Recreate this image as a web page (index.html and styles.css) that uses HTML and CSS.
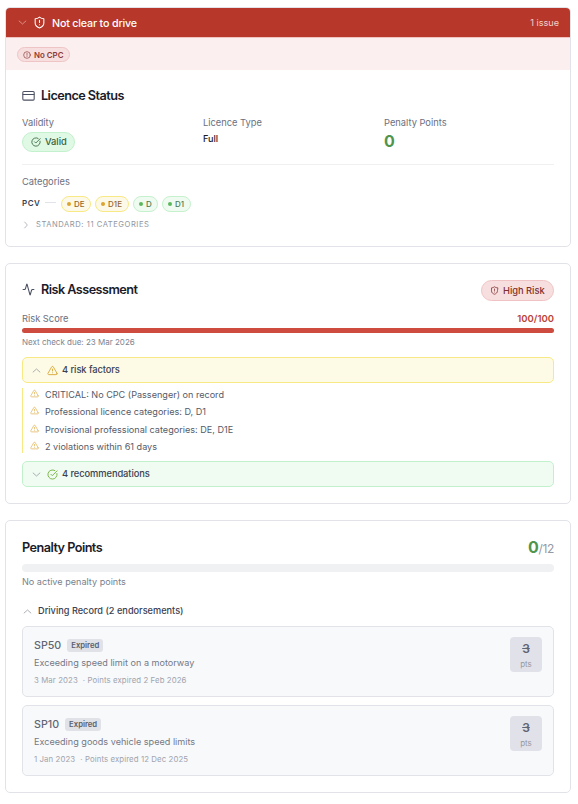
FILE: index.html
```html
<!DOCTYPE html>
<html lang="en">
<head>
<meta charset="utf-8">
<title>Driver licence check</title>
<link rel="stylesheet" href="styles.css">
</head>
<body>
<svg class="sprite" aria-hidden="true">
  <symbol id="down" viewBox="0 0 24 24"><path d="m3 8 9 8 9-8"/></symbol>
  <symbol id="up" viewBox="0 0 24 24"><path d="m3 16 9-8 9 8"/></symbol>
  <symbol id="right" viewBox="0 0 24 24"><path d="m8 3 8 9-8 9"/></symbol>
  <symbol id="shield" viewBox="0 0 24 24"><path d="M20 13c0 5-3.500 7.500-8 9-4.500-1.500-8-4-8-9V5c3 0 5.500-1 8-3 2.500 2 5 3 8 3zM12 8v4M12 16h.01"/></symbol>
  <symbol id="alert" viewBox="0 0 24 24"><circle cx="12" cy="12" r="10"/><path d="M12 7v6M12 16.500h.01"/></symbol>
  <symbol id="card" viewBox="0 0 24 24"><rect x="1.500" y="4.500" width="21" height="16" rx="2"/><path d="M2 10h20"/></symbol>
  <symbol id="check" viewBox="0 0 24 24"><path d="M21.800 10A10 10 0 1 1 17 3.300M8.500 11.500l3 3L22 4"/></symbol>
  <symbol id="pulse" viewBox="0 0 24 24"><path d="M2 12h2.500a2 2 0 0 0 1.900-1.500L8.800 2.200a.25.25 0 0 1 .48 0l5.440 19.600a.25.25 0 0 0 .48 0l2.350-8.300a2 2 0 0 1 1.950-1.500H22"/></symbol>
  <symbol id="warn" viewBox="0 0 24 24"><path d="m21.700 18-8-14a2 2 0 0 0-3.500 0l-8 14A2 2 0 0 0 4 21h16a2 2 0 0 0 1.700-3zM12 9v4M12 17h.01"/></symbol>
</svg>

<section class="card licence">
  <header class="status-bar">
    <svg class="icon chev"><use href="#down"/></svg>
    <svg class="icon shield"><use href="#shield"/></svg>
    <span class="status-title">Not clear to drive</span>
    <span class="issues">1 issue</span>
  </header>
  <div class="issue-list">
    <span class="issue-tag"><svg class="icon"><use href="#alert"/></svg><span>No CPC</span></span>
  </div>
  <div class="card-body">
    <h2 class="title"><svg class="icon"><use href="#card"/></svg><span>Licence Status</span></h2>
    <div class="facts">
      <div><div class="label">Validity</div><span class="valid"><svg class="icon"><use href="#check"/></svg><span>Valid</span></span></div>
      <div><div class="label">Licence Type</div><div class="type">Full</div></div>
      <div><div class="label">Penalty Points</div><div class="zero">0</div></div>
    </div>
    <div class="categories">
      <div class="label cat-label">Categories</div>
      <div class="cat-row">
        <span class="cat-group">PCV</span><span class="dash"></span>
        <span class="cat amber"><span>DE</span></span>
        <span class="cat amber"><span>D1E</span></span>
        <span class="cat green"><span>D</span></span>
        <span class="cat green"><span>D1</span></span>
      </div>
      <div class="standard"><svg class="icon"><use href="#right"/></svg><span>STANDARD: 11 CATEGORIES</span></div>
    </div>
  </div>
</section>

<section class="card risk">
  <div class="card-head">
    <h2 class="title"><svg class="icon"><use href="#pulse"/></svg><span>Risk Assessment</span></h2>
    <span class="high-risk"><svg class="icon"><use href="#shield"/></svg><span>High Risk</span></span>
  </div>
  <div class="score"><span class="label">Risk Score</span><span class="score-value">100/100</span></div>
  <div class="bar full"></div>
  <div class="next">Next check due: 23 Mar 2026</div>
  <div class="fold yellow"><svg class="icon chev"><use href="#up"/></svg><svg class="icon mark"><use href="#warn"/></svg><span>4 risk factors</span></div>
  <ul class="factors">
    <li><svg class="icon"><use href="#warn"/></svg><span>CRITICAL: No CPC (Passenger) on record</span></li>
    <li><svg class="icon"><use href="#warn"/></svg><span>Professional licence categories: D, D1</span></li>
    <li><svg class="icon"><use href="#warn"/></svg><span>Provisional professional categories: DE, D1E</span></li>
    <li><svg class="icon"><use href="#warn"/></svg><span>2 violations within 61 days</span></li>
  </ul>
  <div class="fold mint"><svg class="icon chev"><use href="#down"/></svg><svg class="icon mark"><use href="#check"/></svg><span>4 recommendations</span></div>
</section>

<section class="card points">
  <div class="points-head">
    <h2 class="title"><span>Penalty Points</span></h2>
    <div class="total"><b>0</b><span>/12</span></div>
  </div>
  <div class="bar empty"></div>
  <div class="none">No active penalty points</div>
  <div class="record"><svg class="icon"><use href="#up"/></svg><span>Driving Record (2 endorsements)</span></div>
  <article class="offence">
    <div>
      <div class="offence-head"><span class="code">SP50</span><span class="expired">Expired</span></div>
      <div class="desc"><span>Exceeding speed limit on a motorway</span></div>
      <div class="dates"><span>3 Mar 2023</span><span>· Points expired 2 Feb 2026</span></div>
    </div>
    <div class="pts"><s>3</s><span>pts</span></div>
  </article>
  <article class="offence">
    <div>
      <div class="offence-head"><span class="code">SP10</span><span class="expired">Expired</span></div>
      <div class="desc"><span>Exceeding goods vehicle speed limits</span></div>
      <div class="dates"><span>1 Jan 2023</span><span>· Points expired 12 Dec 2025</span></div>
    </div>
    <div class="pts"><s>3</s><span>pts</span></div>
  </article>
</section>
</body>
</html>
```
FILE: styles.css
```css
* { box-sizing: border-box; }
body { margin: 0; padding: 7px 7px 0 5px; background: #fff; color: #1b1c2b; font: 9.5px/14px Inter, sans-serif; white-space: nowrap; }
.sprite { display: none; }
.icon { display: block; flex: none; width: 10px; height: 10px; fill: none; stroke: currentColor; stroke-width: 2; stroke-linecap: round; stroke-linejoin: round; }
.card { width: 566px; border: 1px solid #e2e3e9; border-radius: 5px; background: #fff; overflow: hidden; margin-bottom: 16px; }
.licence { height: 240px; }
.risk { height: 241px; padding: 16px; }
.points { height: 273px; padding: 16px; margin-bottom: 0; }

.status-bar { height: 30px; display: flex; align-items: center; padding: 0 11px 0 12px; background: #b7382a; border-bottom: 1px solid #f0c3c1; color: #fff; }
.status-bar .chev { width: 9px; height: 9px; color: #e5aca5; }
.status-bar .shield { width: 13px; height: 13px; margin-left: 6px; }
.status-title { margin: 2px 0 0 6px; font-size: 10.7px; font-weight: 500; letter-spacing: -.17px; }
.issues { margin: 1px 0 0 auto; font-size: 9.1px; color: #f0cfcb; }
.issue-list { height: 32px; background: #fbf0ef; padding: 9px 11px; }
.issue-tag { display: flex; width: 53px; height: 15px; align-items: center; gap: 3px; padding: 0 5px; border: 1px solid #efc4c4; border-radius: 8px; background: #f7dfdf; color: #8d3a37; font-size: 7.9px; font-weight: 600; }
.issue-tag .icon { width: 8px; height: 8px; }

.card-body { padding: 16px; }
.title { display: flex; align-items: center; gap: 6px; margin: 0; height: 18px; font-size: 12.7px; line-height: 18px; font-weight: 600; letter-spacing: -.55px; }
.title span { padding-top: 1px; }
.title .icon { width: 13px; height: 13px; color: #4b5162; }
.facts { display: grid; grid-template-columns: repeat(3, 1fr); column-gap: 11px; height: 49px; margin-top: 12px; border-bottom: 1px solid #f0f0f3; }
.facts .type { margin-top: 2px; font-size: 9.1px; font-weight: 500; color: #1b1c2b; }
.label { color: #6b7080; font-size: 9.3px; height: 14px; }
.valid { display: flex; align-items: center; gap: 4px; width: 53px; height: 20px; margin-top: 2px; padding: 0 7px 0 8px; border: 1px solid #c3f0cd; border-radius: 10px; background: #e0f9e5; color: #35613d; font-size: 9.3px; font-weight: 500; }
.zero { margin-top: 1px; font-size: 16px; line-height: 20px; font-weight: 700; color: #50954b; }
.cat-label { margin-top: 10px; }
.cat-row { display: flex; align-items: center; height: 16px; margin-top: 7px; }
.cat-group { width: 19px; font-size: 8px; font-weight: 600; letter-spacing: .5px; color: #3c4150; margin-top: -3px; }
.dash { width: 11px; height: 1px; margin: -3px 5px 0 4px; background: #e2e3e8; }
.cat { display: flex; align-items: center; gap: 3px; height: 16px; margin-right: 4px; padding: 0 5px; border: 1px solid; border-radius: 8px; font-size: 8px; font-weight: 500; }
.cat span { min-width: 6px; letter-spacing: .1px; }
.cat::before { content: ""; width: 4px; height: 4px; border-radius: 50%; background: #5bb75b; }
.cat.amber { border-color: #f8e984; background: #fdf9e8; color: #94682f; }
.cat.amber::before { background: #dba52f; }
.cat.green { border-color: #c5f1cd; background: #effbf1; color: #4b7b50; }
.cat.amber:nth-child(3) { width: 30px; }
.cat.amber:nth-child(4) { width: 34px; }
.cat.green:nth-child(5) { width: 25px; }
.cat.green:nth-child(6) { width: 29px; }
.standard { display: flex; align-items: center; height: 14px; margin-top: 6px; color: #9096a1; font-size: 7.6px; letter-spacing: .55px; }
.standard .icon { width: 8px; height: 8px; margin-right: 6px; }

.card-head { display: flex; justify-content: space-between; height: 20px; }
.high-risk { display: flex; align-items: center; gap: 4px; width: 73px; height: 21px; padding: 0 0 0 8px; border: 1px solid #efc3c3; border-radius: 11px; background: #f7dfdf; color: #7f302e; font-size: 9.3px; font-weight: 500; }
.high-risk .icon { width: 9px; height: 9px; }
.score { display: flex; justify-content: space-between; height: 14px; margin-top: 12px; }
.score-value { color: #bd3f32; font-size: 9.5px; font-weight: 600; }
.bar { border-radius: 6px; }
.bar.full { height: 5px; margin-top: 2px; background: #cd4b3f; }
.next { height: 14px; margin-top: 2px; color: #7e8390; font-size: 8px; }
.fold { display: flex; align-items: center; height: 26px; padding-left: 9px; border: 1px solid; border-radius: 5px; font-size: 9.3px; font-weight: 500; letter-spacing: -.06px; color: #3b4151; }
.fold .chev { width: 9px; height: 9px; color: #8f949d; }
.fold .mark { width: 11px; height: 11px; margin: 0 4px 0 6px; }
.fold.yellow { margin-top: 8px; border-color: #f8e984; background: #fdfae6; }
.fold.yellow .mark { color: #d9a83a; }
.fold.mint { border-color: #c2f0cc; background: #f0fbf2; margin-top: 8px; }
.fold.mint .mark { color: #72b43d; }
.factors { list-style: none; margin: 5px 0 0; padding: 0 0 0 7px; height: 65px; border-left: 1px solid #f8e984; }
.factors li { display: flex; height: 17.4px; font-size: 9.1px; color: #555b69; }
.factors .icon { width: 9px; height: 9px; margin: 1px 6px 0 0; color: #e2b45b; }

.points-head { display: flex; justify-content: space-between; align-items: center; height: 20px; }
.total { display: flex; align-items: baseline; padding-top: 1px; color: #9499a4; font-size: 12px; letter-spacing: -.3px; }
.total b { font-size: 16px; color: #50954b; }
.bar.empty { height: 8px; margin-top: 7px; background: #f0f1f3; }
.none { height: 14px; margin-top: 3px; font-size: 9.1px; color: #7a7f8c; }
.record { display: flex; align-items: center; height: 14px; margin-top: 15px; padding-left: 1px; font-size: 9.2px; font-weight: 500; color: #3b4151; }
.record .icon { width: 9px; height: 9px; margin-right: 6px; color: #8f949d; }
.offence { display: flex; justify-content: space-between; height: 71px; margin-top: 8px; padding: 10px 11px; border: 1px solid #e1e3e8; border-radius: 5px; background: #f8f9fb; }
.offence-head { display: flex; align-items: center; height: 17px; gap: 6px; }
.code { padding-top: 1px; font-size: 10.7px; font-weight: 500; color: #616674; }
.expired { height: 13px; padding: 0 4px; border-radius: 3px; background: #e0e2e8; color: #5a5f6e; font-size: 7.7px; line-height: 13px; font-weight: 600; }
.desc { height: 14px; margin-top: 2px; color: #747987; font-size: 9.1px; }
.dates { display: flex; gap: 5px; height: 14px; margin-top: 3px; color: #a0a4ae; font-size: 7.8px; letter-spacing: .1px; }
.pts { display: flex; flex-direction: column; align-items: center; width: 32px; height: 35px; padding-top: 4px; border-radius: 4px; background: #e1e2e9; color: #5f6473; font-size: 8px; }
.pts s { font-size: 12px; line-height: 16px; font-weight: 600; }
.pts span { color: #9599a5; }
```
